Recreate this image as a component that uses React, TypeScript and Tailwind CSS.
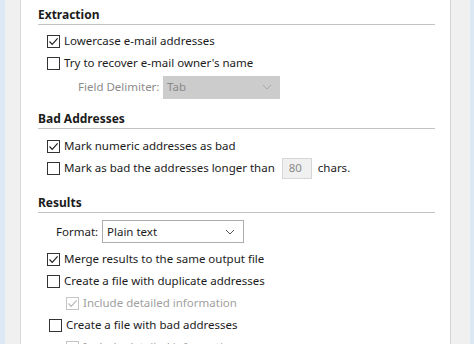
import React from 'react'

const font = { fontFamily: '"Noto Sans", "Open Sans", Arial, sans-serif' }

function Check({ checked = false, disabled = false }: { checked?: boolean; disabled?: boolean }) {
  const border = disabled ? 'border-[#c4c4c4]' : 'border-[#333333]'
  const stroke = disabled ? '#b8b8b8' : '#222222'
  return (
    <span className={`flex h-[13px] w-[13px] shrink-0 items-center justify-center border bg-white ${border}`}>
      {checked && (
        <svg width="11" height="11" viewBox="0 0 11 11" fill="none">
          <path d="M1.5 5.5 L4.2 8.3 L9.6 2.4" stroke={stroke} strokeWidth="1.2" />
        </svg>
      )}
    </span>
  )
}

function Row({
  label,
  checked,
  disabled,
  indent = 9,
  children,
}: {
  label: string
  checked?: boolean
  disabled?: boolean
  indent?: number
  children?: React.ReactNode
}) {
  const ml = indent === 28 ? 'ml-[28px]' : indent === 11 ? 'ml-[11px]' : 'ml-[9px]'
  return (
    <div className={`flex h-[22px] items-center ${ml}`}>
      <Check checked={checked} disabled={disabled} />
      <span className={`ml-[4px] whitespace-nowrap ${disabled ? 'text-[#a0a0a0]' : 'text-[#1b1b1b]'}`}>{label}</span>
      {children}
    </div>
  )
}

function Header({ title, className = '' }: { title: string; className?: string }) {
  return (
    <div className={`flex h-[20px] items-center border-b border-[#c3c3c3] text-[12px] font-bold text-[#1b1b1b] ${className}`}>
      {title}
    </div>
  )
}

function Chevron({ color }: { color: string }) {
  return (
    <svg width="10" height="6" viewBox="0 0 10 6" fill="none">
      <path d="M1 1 L5 5 L9 1" stroke={color} strokeWidth="1" />
    </svg>
  )
}

export default function App() {
  return (
    <div className="flex h-[344px] w-[474px] overflow-hidden bg-white text-[11.5px]" style={font}>
      <div className="w-[5px] bg-[#dce8f3]" />
      <div className="w-[16px] border-r border-[#dadada] bg-[#f0f0f0]" />

      <div className="flex-1 pl-[17px] pr-[15px] pt-[5px]">
        <Header title="Extraction" />
        <div className="mt-[5px]">
          <Row label="Lowercase e-mail addresses" checked />
          <Row label="Try to recover e-mail owner's name" />
          <div className="flex h-[26px] items-center">
            <span className="ml-[40px] w-[85px] whitespace-nowrap text-[#8c8c8c]">Field Delimiter:</span>
            <div className="flex h-[23px] w-[117px] items-center justify-between bg-[#cccccc] pl-[4px] pr-[8px] text-[#8a8a8a]">
              <span>Tab</span>
              <Chevron color="#a8a8a8" />
            </div>
          </div>
        </div>

        <Header title="Bad Addresses" className="mt-[9px]" />
        <div className="mt-[6px]">
          <Row label="Mark numeric addresses as bad" checked />
          <Row label="Mark as bad the addresses longer than">
            <div className="ml-[7px] flex h-[21px] w-[30px] items-center border border-[#d6d6d6] bg-[#f0f0f0] pl-[6px] text-[#8a8a8a]">
              80
            </div>
            <span className="ml-[6px] text-[#1b1b1b]">chars.</span>
          </Row>
        </div>

        <Header title="Results" className="mt-[14px]" />
        <div className="mt-[7px] flex h-[23px] items-center">
          <span className="ml-[18px] w-[46px] text-[#1b1b1b]">Format:</span>
          <div className="flex h-[23px] w-[142px] items-center justify-between border border-[#adadad] bg-white pl-[4px] pr-[8px] text-[#1b1b1b]">
            <span>Plain text</span>
            <Chevron color="#555555" />
          </div>
        </div>
        <div className="mt-[5px]">
          <Row label="Merge results to the same output file" checked />
          <Row label="Create a file with duplicate addresses" />
          <Row label="Include detailed information" checked disabled indent={28} />
          <Row label="Create a file with bad addresses" indent={11} />
          <Row label="Include detailed information" checked disabled indent={28} />
        </div>
      </div>

      <div className="w-[20px] border-l border-[#d4d4d4] bg-[#f0f0f0]" />
      <div className="w-[4px] bg-[#dce8f3]" />
    </div>
  )
}
